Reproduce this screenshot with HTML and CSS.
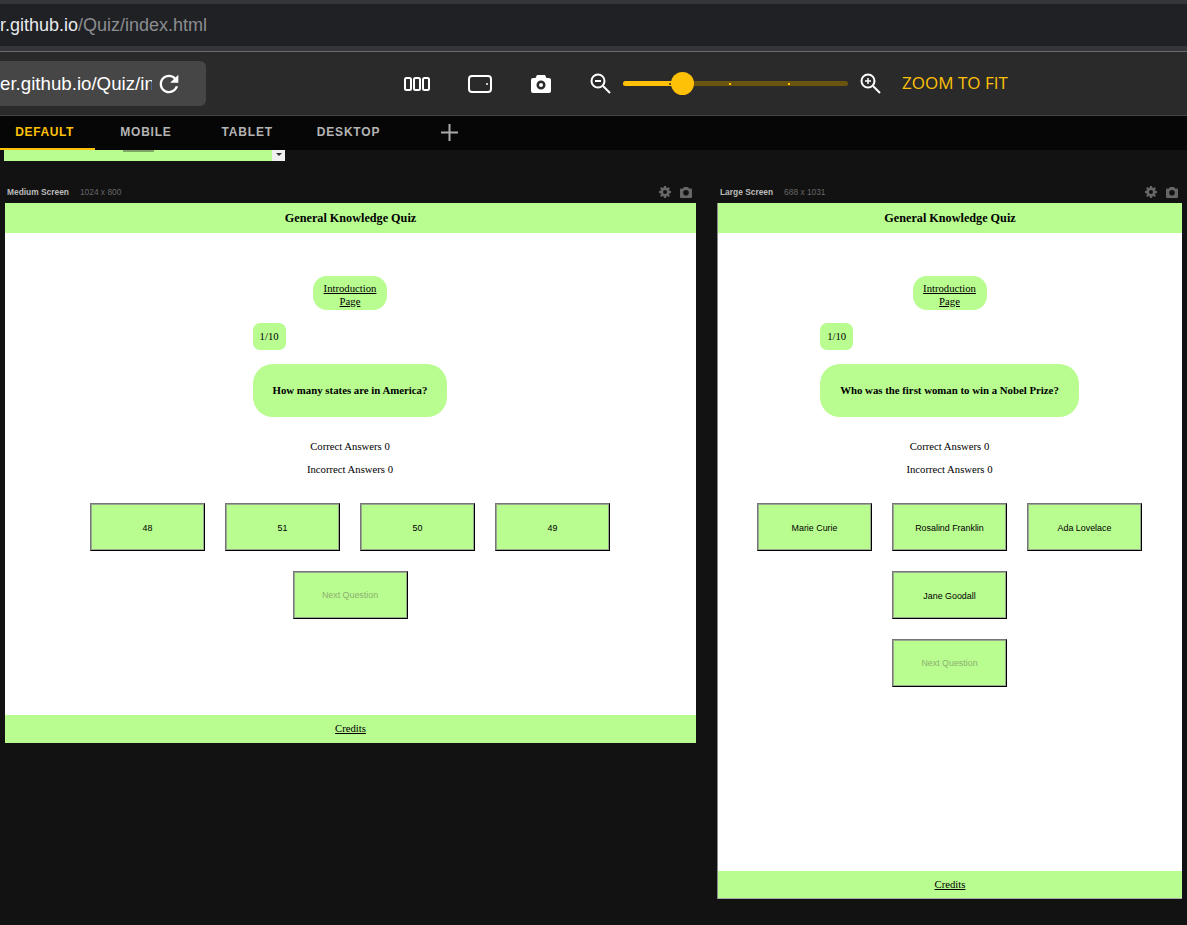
FILE: index.html
```html
<!DOCTYPE html>
<html lang="en">
<head>
    <meta charset="UTF-8">
    <meta name="viewport" content="width=device-width, initial-scale=1.0">
    <title>Responsive Viewer</title>
    <link rel="stylesheet" href="styles.css">
</head>
<body>
    <div class="address-bar"><span class="host">r.github.io</span><span class="path">/Quiz/index.html</span></div>

    <div class="toolbar">
        <div class="url-box">
            <div class="url-text"><span>er.github.io/Quiz/index.html</span></div>
            <svg class="reload" width="28" height="28" viewBox="0 0 24 24">
                <path fill="#fff" d="M17.65 6.350C16.200 4.900 14.210 4 12 4c-4.420 0-7.990 3.580-7.990 8s3.570 8 7.990 8c3.730 0 6.840-2.550 7.730-6h-2.080c-.82 2.330-3.040 4-5.650 4-3.310 0-6-2.690-6-6s2.690-6 6-6c1.660 0 3.140.69 4.220 1.780L13 11h7V4l-2.350 2.350z"/>
            </svg>
        </div>
        <div class="tools">
            <svg class="tool" width="26" height="14" viewBox="0 0 26 14" fill="none" stroke="#fff" stroke-width="2">
                <rect x="1" y="1" width="6" height="12" rx="1.5"/>
                <rect x="10" y="1" width="6" height="12" rx="1.5"/>
                <rect x="19" y="1" width="6" height="12" rx="1.5"/>
            </svg>
            <svg class="tool" width="24" height="18" viewBox="0 0 24 18" fill="none" stroke="#fff" stroke-width="2">
                <rect x="1" y="1" width="22" height="16" rx="3"/>
                <circle cx="19" cy="9" r="1" fill="#fff" stroke="none"/>
            </svg>
            <svg class="tool" width="20" height="18" viewBox="0 0 20 18">
                <path fill="#fff" fill-rule="evenodd" d="M6 0h8l1.5 3H18a2 2 0 0 1 2 2v11a2 2 0 0 1-2 2H2a2 2 0 0 1-2-2V5a2 2 0 0 1 2-2h2.500zM10 5.500a4.500 4.500 0 1 0 0 9 4.500 4.500 0 0 0 0-9zM10 8a2 2 0 1 1 0 4 2 2 0 0 1 0-4z"/>
            </svg>
        </div>
        <div class="zoom">
            <svg width="21" height="21" viewBox="0 0 21 21" fill="none" stroke="#fff" stroke-width="2">
                <circle cx="8" cy="8" r="6.500"/>
                <path d="M13 13l7 7"/>
                <path d="M5 8h6"/>
            </svg>
            <div class="slider">
                <div class="slider-fill"></div>
                <i class="tick tick-1"></i>
                <i class="tick tick-2"></i>
                <i class="tick tick-3"></i>
                <div class="slider-thumb"></div>
            </div>
            <svg width="21" height="21" viewBox="0 0 21 21" fill="none" stroke="#fff" stroke-width="2">
                <circle cx="8" cy="8" r="6.500"/>
                <path d="M13 13l7 7"/>
                <path d="M5 8h6M8 5v6" stroke-width="1.500"/>
            </svg>
            <span class="zoom-fit">ZOOM TO FIT</span>
        </div>
    </div>

    <div class="tabs">
        <div class="tab active">DEFAULT</div>
        <div class="tab">MOBILE</div>
        <div class="tab">TABLET</div>
        <div class="tab">DESKTOP</div>
        <div class="tab">
            <svg width="17" height="17" viewBox="0 0 17 17" stroke="#aaa" stroke-width="2"><path d="M8.500 0v17M0 8.500h17"/></svg>
        </div>
    </div>

    <div class="workspace">
        <div class="stub"><span class="stub-link"></span><span class="stub-arrow"></span></div>

        <div class="panes">
            <section class="pane pane-medium">
                <div class="pane-head">
                    <b>Medium Screen</b><span>1024 x 800</span>
                    <div class="pane-icons">
                        <svg width="12" height="12" viewBox="0 0 12 12"><path fill="#666" fill-rule="evenodd" d="M5 0h2l.3 1.600 1.100.5L9.800 1.200l1.100 1.100-.9 1.400.5 1.100L12 5v2l-1.500.3-.5 1.100.9 1.400-1.100 1.100-1.400-.9-1.100.5L7 12H5l-.3-1.500-1.100-.5-1.400.9-1.100-1.100.9-1.400-.5-1.100L0 7V5l1.500-.3.5-1.100-.9-1.400 1.100-1.100 1.400.9 1.100-.5zM6 4a2 2 0 1 0 0 4 2 2 0 0 0 0-4z"/></svg>
                        <svg width="12" height="11" viewBox="0 0 12 11"><path fill="#666" fill-rule="evenodd" d="M4 0h4l1 1.500h2a1 1 0 0 1 1 1V10a1 1 0 0 1-1 1H1a1 1 0 0 1-1-1V2.500a1 1 0 0 1 1-1h2zM6 3a2.800 2.800 0 1 0 0 5.600A2.800 2.800 0 0 0 6 3z"/></svg>
                    </div>
                </div>
                <div class="frame">
                    <header class="quiz-title">General Knowledge Quiz</header>
                    <main class="quiz">
                        <a class="intro" href="#">Introduction Page</a>
                        <div class="question-wrap">
                            <div class="counter">1/10</div>
                            <div class="question">How many states are in America?</div>
                        </div>
                        <p class="score">Correct Answers 0</p>
                        <p class="score">Incorrect Answers 0</p>
                        <div class="answers">
                            <button>48</button>
                            <button>51</button>
                            <button>50</button>
                            <button>49</button>
                        </div>
                        <button class="next" disabled>Next Question</button>
                    </main>
                    <footer class="credits"><a href="#">Credits</a></footer>
                </div>
            </section>

            <section class="pane pane-large">
                <div class="pane-head">
                    <b>Large Screen</b><span>688 x 1031</span>
                    <div class="pane-icons">
                        <svg width="12" height="12" viewBox="0 0 12 12"><path fill="#666" fill-rule="evenodd" d="M5 0h2l.3 1.600 1.100.5L9.800 1.200l1.100 1.100-.9 1.400.5 1.100L12 5v2l-1.500.3-.5 1.100.9 1.400-1.100 1.100-1.400-.9-1.100.5L7 12H5l-.3-1.500-1.100-.5-1.400.9-1.100-1.100.9-1.400-.5-1.100L0 7V5l1.500-.3.5-1.100-.9-1.400 1.100-1.100 1.400.9 1.100-.5zM6 4a2 2 0 1 0 0 4 2 2 0 0 0 0-4z"/></svg>
                        <svg width="12" height="11" viewBox="0 0 12 11"><path fill="#666" fill-rule="evenodd" d="M4 0h4l1 1.500h2a1 1 0 0 1 1 1V10a1 1 0 0 1-1 1H1a1 1 0 0 1-1-1V2.500a1 1 0 0 1 1-1h2zM6 3a2.800 2.800 0 1 0 0 5.600A2.800 2.800 0 0 0 6 3z"/></svg>
                    </div>
                </div>
                <div class="frame">
                    <header class="quiz-title">General Knowledge Quiz</header>
                    <main class="quiz">
                        <a class="intro" href="#">Introduction Page</a>
                        <div class="question-wrap">
                            <div class="counter">1/10</div>
                            <div class="question">Who was the first woman to win a Nobel Prize?</div>
                        </div>
                        <p class="score">Correct Answers 0</p>
                        <p class="score">Incorrect Answers 0</p>
                        <div class="answers">
                            <button>Marie Curie</button>
                            <button>Rosalind Franklin</button>
                            <button>Ada Lovelace</button>
                            <button>Jane Goodall</button>
                        </div>
                        <button class="next" disabled>Next Question</button>
                    </main>
                    <footer class="credits"><a href="#">Credits</a></footer>
                </div>
            </section>
        </div>
    </div>
</body>
</html>
```

FILE: styles.css
```css
html, body {
    height: 925px;
}
body {
    margin: 0;
    overflow: hidden;
    background-color: #121212;
    font-family: "Liberation Sans", Arial, sans-serif;
}

/* browser address bar */
.address-bar {
    height: 41px;
    margin-top: 4px;
    padding-top: 1px;
    box-shadow: 0 -4px 0 #35363a, 0 5px 0 #35363a;
    background-color: #202124;
    display: flex;
    align-items: center;
    white-space: nowrap;
    font-size: 18px;
}
.host {
    color: #e8eaed;
}
.path {
    color: #8b8d91;
}

/* viewer toolbar */
.toolbar {
    height: 65px;
    margin-top: 5px;
    border-top: 1px solid #6a6a6e;
    border-bottom: 1px solid #444;
    background-color: #2a2a2a;
    display: flex;
    align-items: center;
    box-sizing: border-box;
}
.url-box {
    width: 206px;
    height: 45px;
    border-radius: 0 6px 6px 0;
    background-color: #464646;
    display: flex;
    align-items: center;
    flex-shrink: 0;
}
.url-text {
    width: 152px;
    overflow: hidden;
    display: flex;
    white-space: nowrap;
    color: #fff;
    font-size: 18.700px;
}
.reload {
    margin-left: 3px;
}
.tools {
    margin-left: 198px;
    display: flex;
    align-items: center;
    gap: 38px;
}
.tools .tool:nth-child(2) {
    margin-right: 1px;
}
.zoom {
    margin-left: 39px;
    display: flex;
    align-items: center;
}
.slider {
    position: relative;
    width: 225px;
    height: 5px;
    margin: 0 12px 0 12px;
    border-radius: 3px;
    background-color: #6b5310;
}
.slider-fill {
    width: 60px;
    height: 5px;
    border-radius: 3px;
    background-color: #ffc107;
}
.tick {
    position: absolute;
    top: 2px;
    width: 2px;
    height: 2px;
    background-color: #ffc107;
}
.tick-1 {
    left: 46px;
    background-color: #6b5310;
}
.tick-2 {
    left: 106px;
}
.tick-3 {
    left: 165px;
}
.slider-thumb {
    position: absolute;
    left: 48px;
    top: -9px;
    width: 23px;
    height: 23px;
    border-radius: 50%;
    background-color: #ffc107;
}
.zoom-fit {
    margin-left: 21px;
    margin-top: -2px;
    color: #ffc107;
    font-family: "Open Sans", sans-serif;
    font-size: 17px;
    line-height: 20px;
}

/* device tabs */
.tabs {
    height: 34px;
    margin-left: -6px;
    background-color: #060606;
    display: flex;
}
.tab {
    width: 101.300px;
    box-sizing: border-box;
    padding-bottom: 2px;
    display: flex;
    align-items: center;
    justify-content: center;
    color: #b4b4b4;
    font-size: 12px;
    font-weight: bold;
    letter-spacing: 0.800px;
}
.tab.active {
    color: #ffc107;
    border-bottom: 2px solid #ffc107;
    padding-bottom: 0;
    letter-spacing: 0.600px;
}

/* scaled panes */
.workspace {
    padding-left: 5px;
}
.stub {
    width: 281px;
    height: 11px;
    margin-left: -1px;
    position: relative;
    background-color: #b9fc90;
    display: flex;
    justify-content: flex-end;
}
.stub-link {
    position: absolute;
    left: 119px;
    top: 0;
    width: 31px;
    height: 2px;
    background-color: #7ea766;
}
.stub-arrow {
    width: 13px;
    padding-top: 3px;
    box-sizing: border-box;
    background-color: #f0f0f0;
    display: flex;
    justify-content: center;
}
.stub-arrow::before {
    content: "";
    width: 0;
    height: 0;
    border: 3px solid transparent;
    border-top: 3px solid #333;
}
.panes {
    display: flex;
    gap: 22px;
    align-items: flex-start;
    margin-top: 25px;
}
.pane-medium {
    width: 691px;
}
.pane-large {
    width: 464px;
}
.pane-head {
    height: 12px;
    margin-bottom: 5px;
    padding-left: 2px;
    display: flex;
    align-items: center;
    font-size: 8.400px;
    color: #666;
}
.pane-head b {
    color: #bbb;
    margin-right: 11px;
}
.pane-icons {
    margin-left: auto;
    display: flex;
    align-items: center;
    gap: 9px;
    padding-right: 4px;
}
.frame {
    background-color: #fff;
    display: flex;
    flex-direction: column;
    font-family: "Liberation Serif", "Times New Roman", serif;
    font-size: 10.700px;
    color: #000;
}
.pane-medium .frame {
    height: 540px;
}
.pane-large .frame {
    height: 696px;
    border-bottom: 1px solid #aaa;
    box-shadow: -1px 0 0 #888;
    box-sizing: border-box;
}
.quiz-title {
    height: 30px;
    display: flex;
    align-items: center;
    justify-content: center;
    background-color: #b9fc90;
    font-size: 12.200px;
    font-weight: bold;
}
.quiz {
    flex: 1;
    padding: 43px 1px 0 0;
    display: flex;
    flex-direction: column;
    align-items: center;
}
.intro {
    width: 74px;
    height: 34px;
    padding: 3px 8px 0;
    box-sizing: border-box;
    display: flex;
    align-items: center;
    justify-content: center;
    text-align: center;
    line-height: 13px;
    border-radius: 14px;
    background-color: #b9fc90;
    color: #000;
}
.question-wrap {
    margin-top: 13px;
    display: flex;
    flex-direction: column;
    align-items: flex-start;
}
.counter {
    width: 33px;
    height: 27px;
    padding-bottom: 1px;
    box-sizing: border-box;
    display: flex;
    align-items: center;
    justify-content: center;
    border-radius: 7px;
    background-color: #b9fc90;
}
.question {
    margin-top: 14px;
    height: 53px;
    padding: 0 20px 1px;
    box-sizing: border-box;
    display: flex;
    align-items: center;
    border-radius: 20px;
    background-color: #b9fc90;
    font-size: 10.800px;
    font-weight: bold;
}
.score {
    margin: 0;
    height: 23px;
    line-height: 23px;
}
.question-wrap + .score {
    margin-top: 18px;
}
.answers {
    max-width: 620px;
    margin-top: 22px;
    display: flex;
    flex-wrap: wrap;
    justify-content: center;
    gap: 20px;
}
button {
    width: 115px;
    height: 48px;
    padding: 1px 0 0;
    border: 1px solid;
    border-color: #767676 #000 #000 #767676;
    outline: 1px solid #9aa88f;
    outline-offset: -2px;
    background-color: #b9fc90;
    color: #000;
    font-family: "Liberation Sans", Arial, sans-serif;
    font-size: 8.900px;
}
.next {
    margin-top: 20px;
    padding-top: 0;
    color: #8cb06f;
}
.credits {
    height: 28px;
    padding-bottom: 2px;
    box-sizing: border-box;
    display: flex;
    align-items: center;
    justify-content: center;
    background-color: #b9fc90;
}
.pane-large .credits {
    height: 27px;
    padding-bottom: 1px;
}
.credits a {
    color: #000;
}
```
